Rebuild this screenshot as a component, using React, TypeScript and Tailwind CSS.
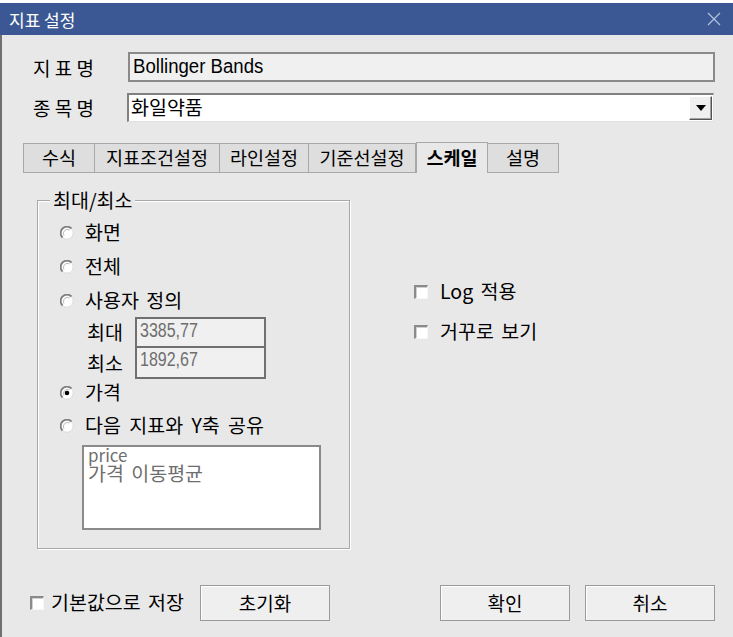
import React from 'react';

const KR = "font-['Noto_Sans_CJK_KR',sans-serif]";

function Radio({ checked = false }: { checked?: boolean }) {
  return (
    <svg width="14" height="14" viewBox="0 0 14 14" className="shrink-0">
      <circle cx="7" cy="7" r="6.2" fill="#ffffff" stroke="#d6d6d6" strokeWidth="0.8" />
      <path d="M2.5 11.5 A6.2 6.2 0 0 1 11.5 2.5" fill="none" stroke="#808080" strokeWidth="1.8" />
      <path d="M3.9 9.6 A4.2 4.2 0 0 1 9.6 3.9" fill="none" stroke="#bdbdbd" strokeWidth="1" />
      {checked && <circle cx="7" cy="7" r="2.3" fill="#000000" />}
    </svg>
  );
}

function Check() {
  return (
    <span className="w-[14px] h-[14px] shrink-0 bg-white border-t-2 border-l-2 border-[#8a8a8a] border-r border-b border-r-[#f6f6f6] border-b-[#f6f6f6] shadow-[inset_1px_1px_0_#d0d0d0]" />
  );
}

function Btn({ label }: { label: string }) {
  return (
    <button className="w-[130px] h-[36px] bg-[#efefef] border border-[#9a9a9a] shadow-[inset_1px_1px_0_#ffffff] text-[19px] leading-none pb-[2px] text-black flex items-center justify-center">
      {label}
    </button>
  );
}

function SpacedLabel({ chars }: { chars: string[] }) {
  return (
    <span className="w-[61px] flex justify-between text-[19px] leading-none">
      {chars.map(c => (
        <span key={c}>{c}</span>
      ))}
    </span>
  );
}

const TABS = [
  { name: '수식', w: 'w-[72px]' },
  { name: '지표조건설정', w: 'w-[126px]' },
  { name: '라인설정', w: 'w-[90px]' },
  { name: '기준선설정', w: 'w-[108px]' },
  { name: '스케일', w: 'w-[72px]', active: true },
  { name: '설명', w: 'w-[72px]' },
];

const NUM = "font-['Liberation_Sans',sans-serif] text-[20px] text-[#6e6e6e] leading-none scale-x-[0.8] origin-left";

export default function App() {
  return (
    <div className={`w-[733px] h-[637px] overflow-hidden bg-[#e8e8e8] text-black ${KR} flex flex-col`}>
      <div className="h-[3px] bg-white" />
      {/* Title bar */}
      <div className="h-[32px] bg-[#3b5894] flex items-center justify-between pl-[9px] pr-[12px] text-white">
        <span className="text-[17px] leading-none">지표 설정</span>
        <svg width="14" height="14" viewBox="0 0 14 14">
          <path d="M1 1 L13 13 M13 1 L1 13" stroke="#b4c2de" strokeWidth="1.2" />
        </svg>
      </div>

      <div className="flex-1 flex flex-col border-l-2 border-[#707070]">
        {/* Indicator name */}
        <div className="flex items-center mt-[17px] h-[30px] pl-[31px]">
          <SpacedLabel chars={['지', '표', '명']} />
          <div className="ml-[34px] w-[587px] h-[30px] bg-[#f0f0f0] border-2 border-[#8a8a8a] flex items-start pl-[3px] pt-[1px] overflow-hidden">
            <span className="font-['Liberation_Sans',sans-serif] text-[20px] leading-[22px] scale-x-[0.93] origin-left whitespace-nowrap">
              Bollinger Bands
            </span>
          </div>
        </div>

        {/* Stock name */}
        <div className="flex items-center mt-[11px] h-[28px] pl-[31px]">
          <SpacedLabel chars={['종', '목', '명']} />
          <div className="ml-[33px] w-[587px] h-[29px] bg-white border-t-2 border-l-2 border-[#808080] border-r border-b border-r-[#e0e0e0] border-b-[#e0e0e0] flex items-center justify-between pl-[2px] pr-[1px]">
            <span className="text-[19.5px] leading-none pb-[1px]">화일약품</span>
            <div className="w-[23px] h-[24px] bg-[#efefef] border border-t-white border-l-white border-r-[#555555] border-b-[#555555] shadow-[inset_-1px_-1px_0_#a0a0a0] flex items-center justify-center">
              <svg width="10" height="6" viewBox="0 0 10 6">
                <path d="M0 0 L10 0 L5 6 Z" fill="#000000" />
              </svg>
            </div>
          </div>
        </div>

        {/* Tabs */}
        <div className="flex items-end mt-[21px] ml-[21px] h-[31px]">
          {TABS.map(t =>
            t.active ? (
              <div
                key={t.name}
                className={`${t.w} h-[31px] bg-[#e8e8e8] border-t border-l border-r border-[#a8a8a8] flex items-center justify-center font-bold text-[18.5px] leading-none pb-[2px]`}
              >
                {t.name}
              </div>
            ) : (
              <div
                key={t.name}
                className={`${t.w} h-[30px] bg-[#dedede] border border-[#a8a8a8] -ml-px first:ml-0 flex items-center justify-center text-[18.5px] leading-none pb-[2px] whitespace-nowrap`}
              >
                {t.name}
              </div>
            )
          )}
        </div>

        {/* Tab page */}
        <div className="flex mt-[27px] ml-[35px]">
          {/* Group box */}
          <div className="relative w-[313px] h-[349px] border border-[#a8a8a8] shadow-[inset_1px_1px_0_#ffffff,1px_1px_0_#ffffff] pt-[15px] pl-[22px]">
            <span className="absolute -top-[13px] left-[12px] px-[3px] bg-[#e8e8e8] text-[19.5px] leading-[24px]">최대/최소</span>

            <div className="h-[34px] flex items-center gap-[11px]">
              <Radio />
              <span className="text-[19.5px] leading-none pb-[2px]">화면</span>
            </div>
            <div className="h-[34px] flex items-center gap-[11px]">
              <Radio />
              <span className="text-[19.5px] leading-none pb-[2px]">전체</span>
            </div>
            <div className="h-[33px] flex items-center gap-[11px]">
              <Radio />
              <span className="text-[19.5px] leading-none pb-[2px] [word-spacing:3px]">사용자 정의</span>
            </div>

            <div className="flex items-center h-[31px] ml-[27px]">
              <span className="w-[48px] text-[19.5px] leading-none pb-[2px]">최대</span>
              <div className="w-[131px] h-[31px] bg-[#f0f0f0] border-2 border-[#707070] pl-[3px] pt-[1px] flex items-start overflow-hidden">
                <span className={NUM}>3385,77</span>
              </div>
            </div>
            <div className="flex items-center h-[31px] ml-[27px]">
              <span className="w-[48px] text-[19.5px] leading-none pb-[2px]">최소</span>
              <div className="w-[131px] h-[31px] bg-[#f0f0f0] border-2 border-t-0 border-[#707070] pl-[3px] pt-[1px] flex items-start overflow-hidden">
                <span className={NUM}>1892,67</span>
              </div>
            </div>

            <div className="h-[28px] flex items-center gap-[11px]">
              <Radio checked />
              <span className="text-[19.5px] leading-none pb-[2px]">가격</span>
            </div>
            <div className="h-[38px] flex items-center gap-[11px]">
              <Radio />
              <span className="text-[19.5px] leading-none pb-[2px] [word-spacing:4px]">다음 지표와 Y축 공유</span>
            </div>

            <div className="ml-[22px] w-[239px] h-[85px] bg-white border-2 border-[#8a8a8a] px-[4px] text-[#6e6e6e]">
              <div className="text-[17px] leading-[15px]">price</div>
              <div className="text-[19.5px] leading-[21px] [word-spacing:3px]">가격 이동평균</div>
            </div>
          </div>

          {/* Right options */}
          <div className="flex flex-col ml-[64px] pt-[82px] gap-[20px]">
            <div className="h-[20px] flex items-center gap-[12px]">
              <Check />
              <span className="text-[19.5px] leading-none pb-[2px] [word-spacing:3px]">Log 적용</span>
            </div>
            <div className="h-[20px] flex items-center gap-[12px]">
              <Check />
              <span className="text-[19.5px] leading-none pb-[2px] [word-spacing:3px]">거꾸로 보기</span>
            </div>
          </div>
        </div>

        {/* Bottom bar */}
        <div className="flex items-center mt-[36px] h-[36px] pl-[28px]">
          <div className="w-[170px] flex items-center">
            <Check />
            <span className="ml-[7px] text-[19.5px] leading-none pb-[2px] whitespace-nowrap [word-spacing:3px]">기본값으로 저장</span>
          </div>
          <Btn label="초기화" />
          <div className="ml-[110px]">
            <Btn label="확인" />
          </div>
          <div className="ml-[15px]">
            <Btn label="취소" />
          </div>
        </div>
      </div>
    </div>
  );
}
